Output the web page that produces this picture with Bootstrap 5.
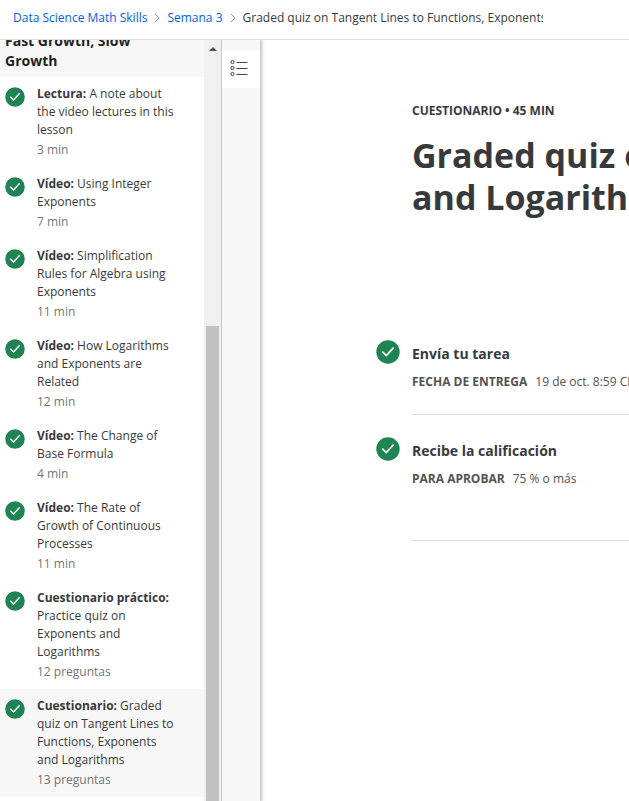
<!DOCTYPE html>
<html lang="es">
<head>
<meta charset="utf-8">
<meta name="viewport" content="width=device-width, initial-scale=1">
<title>Data Science Math Skills</title>
<link rel="stylesheet" href="https://cdn.jsdelivr.net/npm/bootstrap@5.3.0/dist/css/bootstrap.min.css">
<style>
body { font-family: "Open Sans", sans-serif; font-size: 12px; line-height: 18px; color: #373a3c; }
a { text-decoration: none; }
.top-bar { height: 40px; padding: 0 0 4px 13px; border-bottom: 1px solid #ddd; }
.top-bar a { color: #0062e4; }
.crumbs { gap: 7px; }
.current-page { max-width: 300px; text-overflow: clip; }
.work-area { min-height: 0; }
.lessons { width: 204px; }
.group-title { height: 37px; padding: 0 24px 6px 5px; background: #f7f7f7; }
.group-title h2 { font-size: 14px; line-height: 20px; color: #1f1f1f; }
.lesson { gap: 12px; padding: 8px 24px 8px 5px; color: #373a3c; }
.lesson svg { width: 20px; height: 20px; margin-top: 2px; }
.lesson.active { background: #f7f7f7; }
.lesson .length { margin-top: 2px; color: #757575; }
.scroll-track { width: 17px; padding: 0 2px; background: #f0f0f0; }
.scroll-arrow { height: 17px; }
.scroll-gap { flex: 269 1 0; }
.scroll-thumb { flex: 475 1 0; background: #c1c1c1; }
.rail { width: 39px; padding-top: 10px; background: #f7f7f7; border-left: 1px solid #c7c7c7; box-shadow: 1px 0 3px 1px rgba(0,0,0,.25); clip-path: inset(0 -5px 0 0); }
.rail button { height: 38px; padding: 0 12px 2px 8px; background: #fff; }
.quiz { padding: 62px 0 0 116px; }
.title-block { padding-left: 36px; }
.kicker { margin-bottom: 14px; }
.quiz h1 { font-size: 34px; line-height: 42px; margin-bottom: 122px; }
.step { gap: 12px; }
.step svg { width: 24px; height: 24px; }
.step-body { padding-top: 4px; border-bottom: 1px solid #ddd; }
.step h3 { font-size: 14px; line-height: 20px; margin-bottom: 9px; }
.step dl { gap: 8px; color: #525252; }
.step-short { padding-bottom: 23px; }
.step-long { padding-bottom: 52px; }
.step-gap { margin-bottom: 22px; }
</style>
<script src="https://cdn.jsdelivr.net/npm/bootstrap@5.3.0/dist/js/bootstrap.bundle.min.js"></script>
</head>
<body class="vh-100 d-flex flex-column overflow-hidden bg-white">
<svg class="d-none" aria-hidden="true">
  <symbol id="done" viewBox="0 0 24 24"><circle cx="12" cy="12" r="11.7" fill="#1f8354"/><path d="M6.300 11.700l4 3.900 7.300-8" fill="none" stroke="#fff" stroke-width="1.700"/></symbol>
  <symbol id="next" viewBox="0 0 6 10"><path d="M1 1l4 4-4 4" fill="none" stroke="#999" stroke-width="1"/></symbol>
</svg>
<header class="top-bar d-flex align-items-center flex-shrink-0">
  <nav class="crumbs d-flex align-items-center text-nowrap" aria-label="Ruta">
    <a href="#">Data Science Math Skills</a>
    <svg width="6" height="10" aria-hidden="true"><use href="#next"/></svg>
    <a href="#">Semana 3</a>
    <svg width="6" height="10" aria-hidden="true"><use href="#next"/></svg>
    <span class="current-page overflow-hidden" aria-current="page">Graded quiz on Tangent Lines to Functions, Exponents and Logarithms</span>
  </nav>
</header>
<div class="work-area d-flex flex-grow-1">
  <aside class="lessons flex-shrink-0 overflow-hidden">
    <div class="group-title d-flex align-items-end overflow-hidden"><h2 class="fw-bold m-0">Fast Growth, Slow Growth</h2></div>
    <a href="#" class="lesson d-flex align-items-start"><svg class="flex-shrink-0"><use href="#done"/></svg><div><strong>Lectura:</strong> A note about the video lectures in this lesson<div class="length">3 min</div></div></a>
    <a href="#" class="lesson d-flex align-items-start"><svg class="flex-shrink-0"><use href="#done"/></svg><div><strong>Vídeo:</strong> Using Integer Exponents<div class="length">7 min</div></div></a>
    <a href="#" class="lesson d-flex align-items-start"><svg class="flex-shrink-0"><use href="#done"/></svg><div><strong>Vídeo:</strong> Simplification Rules for Algebra using Exponents<div class="length">11 min</div></div></a>
    <a href="#" class="lesson d-flex align-items-start"><svg class="flex-shrink-0"><use href="#done"/></svg><div><strong>Vídeo:</strong> How Logarithms and Exponents are Related<div class="length">12 min</div></div></a>
    <a href="#" class="lesson d-flex align-items-start"><svg class="flex-shrink-0"><use href="#done"/></svg><div><strong>Vídeo:</strong> The Change of Base Formula<div class="length">4 min</div></div></a>
    <a href="#" class="lesson d-flex align-items-start"><svg class="flex-shrink-0"><use href="#done"/></svg><div><strong>Vídeo:</strong> The Rate of Growth of Continuous Processes<div class="length">11 min</div></div></a>
    <a href="#" class="lesson d-flex align-items-start"><svg class="flex-shrink-0"><use href="#done"/></svg><div><strong>Cuestionario práctico:</strong> Practice quiz on Exponents and Logarithms<div class="length">12 preguntas</div></div></a>
    <a href="#" class="lesson active d-flex align-items-start"><svg class="flex-shrink-0"><use href="#done"/></svg><div><strong>Cuestionario:</strong> Graded quiz on Tangent Lines to Functions, Exponents and Logarithms<div class="length">13 preguntas</div></div></a>
  </aside>
  <div class="scroll-track d-flex flex-column flex-shrink-0" aria-hidden="true">
    <div class="scroll-arrow d-flex align-items-center justify-content-center"><svg width="8" height="4"><path d="M0 4l4-4 4 4z" fill="#505050"/></svg></div>
    <div class="scroll-gap"></div>
    <div class="scroll-thumb"></div>
  </div>
  <div class="rail flex-shrink-0">
    <button type="button" class="border-0 w-100 d-flex align-items-center justify-content-center" aria-label="Lista de lecciones">
      <svg width="18" height="18" fill="none" stroke="#444" stroke-width="1"><circle cx="2.500" cy="3" r="1.600"/><circle cx="2.500" cy="9" r="1.600"/><circle cx="2.500" cy="15" r="1.600"/><path d="M6.500 3.500h11M6.500 9.500h11M6.500 15.500h11"/></svg>
    </button>
  </div>
  <main class="quiz flex-grow-1 overflow-hidden text-nowrap">
    <div class="title-block">
      <p class="kicker fw-bold">CUESTIONARIO • 45 MIN</p>
      <h1 class="fw-bold">Graded quiz on Tangent Lines to Functions, Exponents<br>and Logarithms</h1>
    </div>
    <section class="step step-gap d-flex align-items-start">
      <svg class="flex-shrink-0"><use href="#done"/></svg>
      <div class="step-body step-short flex-grow-1">
        <h3 class="fw-bold">Envía tu tarea</h3>
        <dl class="d-flex m-0"><dt class="fw-bold">FECHA DE ENTREGA</dt><dd class="m-0">19 de oct. 8:59 CEST</dd></dl>
      </div>
    </section>
    <section class="step d-flex align-items-start">
      <svg class="flex-shrink-0"><use href="#done"/></svg>
      <div class="step-body step-long flex-grow-1">
        <h3 class="fw-bold">Recibe la calificación</h3>
        <dl class="d-flex m-0"><dt class="fw-bold">PARA APROBAR</dt><dd class="m-0">75 % o más</dd></dl>
      </div>
    </section>
  </main>
</div>
</body>
</html>
